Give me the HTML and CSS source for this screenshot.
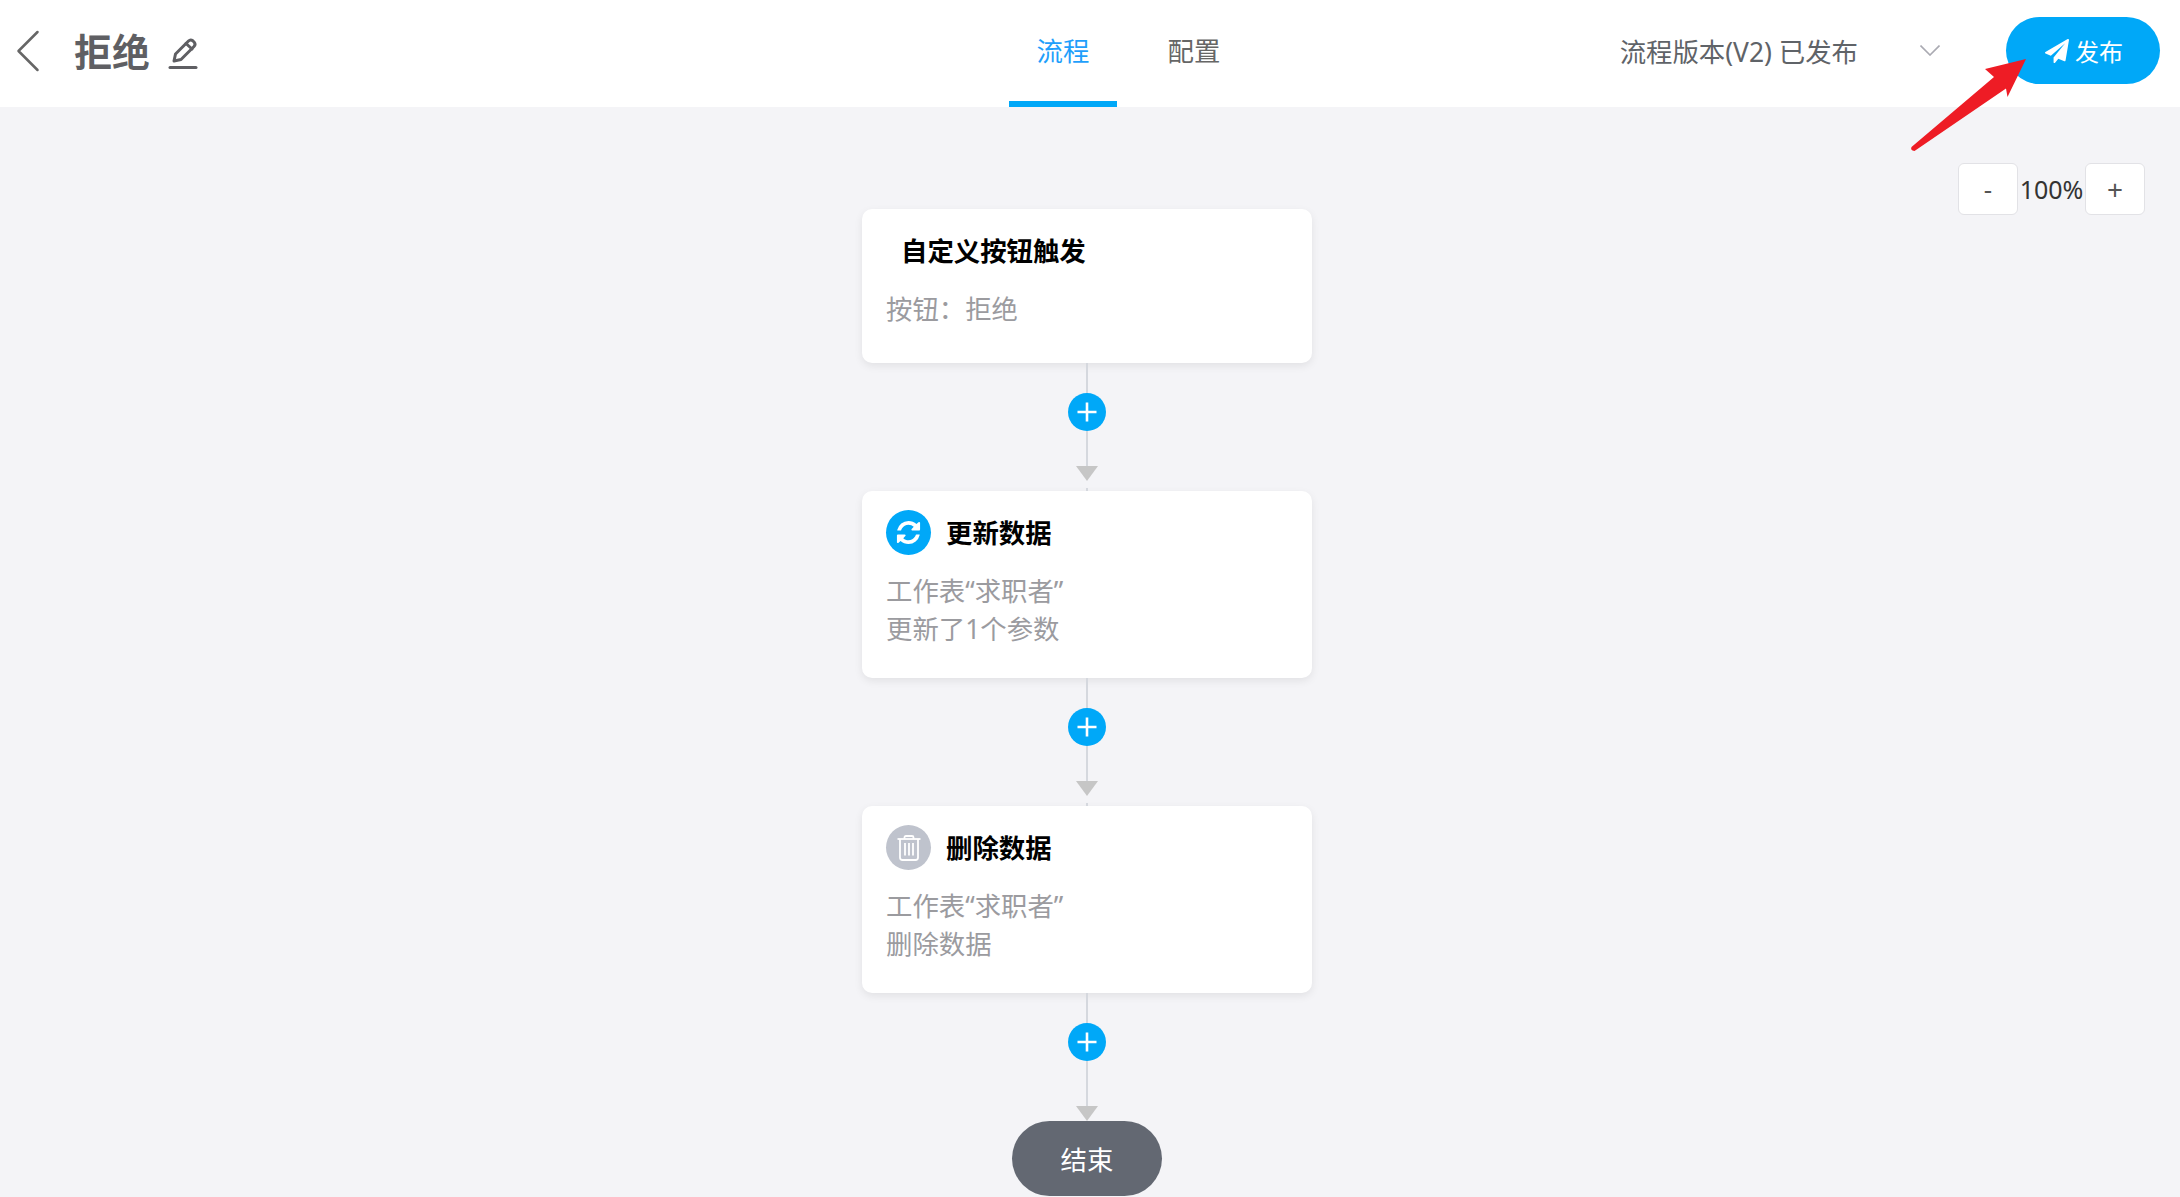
FILE: index.html
```html
<!DOCTYPE html>
<html lang="zh-CN">
<head>
<meta charset="utf-8">
<title>拒绝</title>
<link rel="stylesheet" href="styles.css">
</head>
<body>
<header class="topbar">
  <div class="topbar-left">
    <svg class="back-icon" viewBox="0 0 24 42" width="24" height="42"><path d="M21.5 2 L2.5 21 L21.5 40"/></svg>
    <h1 class="page-title">拒绝</h1>
    <svg class="edit-icon" viewBox="0 0 30 32" width="30" height="32"><path d="M2 30.5 H28"/><path d="M6 24 L7.5 17 L20.5 4 Q22.5 2 24.8 3.8 L26.2 5.2 Q28 7.500 26 9.500 L13 22.500 Z"/><path d="M18 6.500 L24 12"/></svg>
  </div>
  <nav class="tabs">
    <a class="tab tab-active">流程</a>
    <a class="tab">配置</a>
  </nav>
  <div class="topbar-right">
    <span class="version">流程版本(V2) 已发布</span>
    <svg class="chevron-icon" viewBox="0 0 20 11" width="20" height="11"><path d="M0.500 0.500 L10 10 L19.500 0.500"/></svg>
    <button class="publish-btn">
      <svg class="plane-icon" viewBox="0 0 1792 1792" width="24" height="24"><path d="M1764 11q33 24 27 64l-256 1536q-5 29-32 45-14 8-31 8-11 0-24-5l-453-185-242 295q-18 23-49 23-13 0-22-4-19-7-30.500-23.500t-11.500-36.500v-349l864-1059-1069 925-395-162q-37-14-40-55-2-40 32-59l1664-960q15-9 32-9 20 0 36 11z"/></svg>
      <span>发布</span>
    </button>
  </div>
</header>

<main class="canvas">
  <section class="card card-single">
    <div class="card-head"><span class="icon-spacer"></span><h2 class="card-title">自定义按钮触发</h2></div>
    <p class="card-desc">按钮：拒绝</p>
  </section>

  <div class="connector">
    <span class="add-btn"><svg viewBox="0 0 20 20" width="20" height="20"><path d="M10 0.500 V19.500 M0.500 10 H19.500"/></svg></span>
    <span class="arrow-down"></span>
  </div>

  <section class="card">
    <div class="card-head">
      <span class="node-icon node-blue"><svg viewBox="0 0 1792 1792" width="27" height="27"><path d="M1639 1056q0 5-1 7-64 268-268 434.500t-478 166.500q-146 0-282.500-55t-243.500-157l-129 129q-19 19-45 19t-45-19-19-45v-448q0-26 19-45t45-19h448q26 0 45 19t19 45-19 45l-137 137q71 66 161 102t187 36q134 0 250-65t186-179q11-17 53-117 8-23 30-23h192q13 0 22.500 9.500t9.500 22.500zm25-800v448q0 26-19 45t-45 19h-448q-26 0-45-19t-19-45 19-45l138-138q-148-137-349-137-134 0-250 65t-186 179q-11 17-53 117-8 23-30 23h-199q-13 0-22.500-9.500t-9.500-22.500v-7q65-268 270-434.500t480-166.500q146 0 284 55.500t245 156.500l130-129q19-19 45-19t45 19 19 45z"/></svg></span>
      <h2 class="card-title">更新数据</h2>
    </div>
    <p class="card-desc">工作表“求职者”<br>更新了1个参数</p>
  </section>

  <div class="connector">
    <span class="add-btn"><svg viewBox="0 0 20 20" width="20" height="20"><path d="M10 0.500 V19.500 M0.500 10 H19.500"/></svg></span>
    <span class="arrow-down"></span>
  </div>

  <section class="card">
    <div class="card-head">
      <span class="node-icon node-gray"><svg class="trash-icon" viewBox="0 0 24 26" width="24" height="26"><path d="M0.500 4 H23.500"/><path d="M7.500 4 V2.500 Q7.500 1 9 1 H15 Q16.500 1 16.500 2.500 V4"/><path d="M3 4 V22.500 Q3 25 5.500 25 H18.500 Q21 25 21 22.500 V4"/><path d="M8 8 V20.500 M12 8 V20.500 M16 8 V20.500"/></svg></span>
      <h2 class="card-title">删除数据</h2>
    </div>
    <p class="card-desc">工作表“求职者”<br>删除数据</p>
  </section>

  <div class="connector connector-end">
    <span class="add-btn"><svg viewBox="0 0 20 20" width="20" height="20"><path d="M10 0.500 V19.500 M0.500 10 H19.500"/></svg></span>
    <span class="arrow-down"></span>
  </div>

  <div class="end-node">结束</div>
</main>

<div class="zoom-controls">
  <button class="zoom-btn">-</button>
  <span class="zoom-value">100%</span>
  <button class="zoom-btn zoom-plus">+</button>
</div>

<svg class="annotation" viewBox="0 0 130 105" width="130" height="105"><path d="M126 9 L85 19 L94 27 L11.500 97 Q10 100.500 14.500 101 L106 38.500 L107.500 47 Z"/></svg>
</body>
</html>
```
FILE: styles.css
```css
* { box-sizing: border-box; }
html, body { margin: 0; height: 100%; }
body {
  position: relative;
  width: 2180px;
  height: 1197px;
  overflow: hidden;
  background: #f4f4f7;
  font-family: "Noto Sans", "Noto Sans CJK SC", sans-serif;
  color: #333;
}

/* top bar */
.topbar {
  display: flex;
  align-items: stretch;
  height: 107px;
  background: #fff;
}
.topbar-left {
  display: flex;
  align-items: center;
  width: 1009px;
  padding-left: 16px;
  padding-bottom: 6px;
}
.back-icon { fill: none; stroke: #666; stroke-width: 2.5; stroke-linecap: round; stroke-linejoin: round; }
.page-title {
  margin: 0 0 0 34px;
  font-size: 38px;
  line-height: 50px;
  font-weight: 700;
  color: #5f5f63;
}
.edit-icon { margin: 4px 0 0 18px; fill: none; stroke: #5f5f63; stroke-width: 3; stroke-linecap: round; stroke-linejoin: round; }
.tabs { display: flex; gap: 23px; }
.tab {
  display: flex;
  align-items: center;
  justify-content: center;
  width: 108px;
  padding-bottom: 2px;
  font-size: 26.400px;
  color: #666;
  border-bottom: 6px solid transparent;
}
.tab-active { color: #1f9ffb; border-bottom-color: #00a8f8; }
.topbar-right {
  display: flex;
  align-items: center;
  margin-left: auto;
  padding-right: 20px;
  padding-bottom: 6px;
}
.version { font-size: 26.400px; color: #5f6368; }
.chevron-icon { margin-left: 62px; fill: none; stroke: #aaaab2; stroke-width: 1.6; }
.publish-btn {
  display: flex;
  align-items: center;
  justify-content: center;
  gap: 6px;
  width: 154px;
  height: 67px;
  margin-left: 66px;
  padding: 0 0 0 2px;
  border: 0;
  border-radius: 34px;
  background: #00a8f8;
  color: #fff;
  font-family: inherit;
  font-size: 24px;
}
.plane-icon { fill: #fff; }

/* flow */
.canvas {
  display: flex;
  flex-direction: column;
  align-items: center;
  width: 450px;
  margin-left: 862px;
  padding-top: 102px;
}
.card {
  width: 450px;
  height: 187px;
  padding: 19px 24px 0;
  background: #fff;
  border-radius: 10px;
  box-shadow: 0 3px 8px rgba(0, 0, 0, .08);
}
.card-single { height: 154px; }
.card-head { display: flex; align-items: center; height: 45px; gap: 15px; }
.icon-spacer { width: 0; }
.card-title { margin: 1px 0 0; font-size: 26.400px; line-height: 45px; font-weight: 700; color: #000; }
.card-desc { margin: 17px 0 0; font-size: 26.400px; line-height: 38px; color: #9b9b9f; }
.node-icon {
  display: flex;
  align-items: center;
  justify-content: center;
  width: 45px;
  height: 45px;
  border-radius: 50%;
}
.node-blue { background: #00a8f8; }
.node-blue svg { fill: #fff; }
.node-gray { background: #bfc3cd; }
.trash-icon { fill: none; stroke: #fff; stroke-width: 1.8; }

.connector {
  position: relative;
  display: flex;
  flex-direction: column;
  align-items: center;
  width: 100%;
  height: 128px;
  padding-top: 30px;
}
.connector::before {
  content: "";
  position: absolute;
  left: 224px;
  top: 0;
  width: 2px;
  height: 103px;
  background: #d5d8de;
}
.connector::after {
  content: "";
  position: absolute;
  left: 224px;
  bottom: 0;
  width: 2px;
  height: 3px;
  background: #d5d8de;
}
.add-btn {
  position: relative;
  display: flex;
  align-items: center;
  justify-content: center;
  width: 38px;
  height: 38px;
  border-radius: 50%;
  background: #00a8f8;
}
.add-btn svg { fill: none; stroke: #fff; stroke-width: 2.6; }
.arrow-down {
  position: relative;
  width: 0;
  height: 0;
  margin-top: 35px;
  border-left: 11.500px solid transparent;
  border-right: 11.500px solid transparent;
  border-top: 15px solid #c6c6c6;
}
.connector-end::before { height: 113px; }
.connector-end::after { display: none; }
.connector-end .arrow-down { margin-top: 45px; }
.end-node {
  position: relative;
  display: flex;
  align-items: center;
  justify-content: center;
  flex: none;
  width: 150px;
  height: 75px;
  border-radius: 38px;
  background: #636872;
  color: #fff;
  font-size: 26.400px;
}

/* overlays */
.zoom-controls {
  position: absolute;
  top: 163px;
  left: 1958px;
  display: flex;
  align-items: center;
}
.zoom-btn {
  width: 60px;
  height: 52px;
  padding: 0;
  border: 1px solid #e2e2e6;
  border-radius: 6px;
  background: #fff;
  color: #555;
  font-family: inherit;
  font-size: 26px;
}
.zoom-plus { font-size: 28px; }
.zoom-value { width: 67px; text-align: center; font-size: 25px; color: #333; }
.annotation { position: absolute; top: 50px; left: 1900px; fill: #ee1c25; }
```
